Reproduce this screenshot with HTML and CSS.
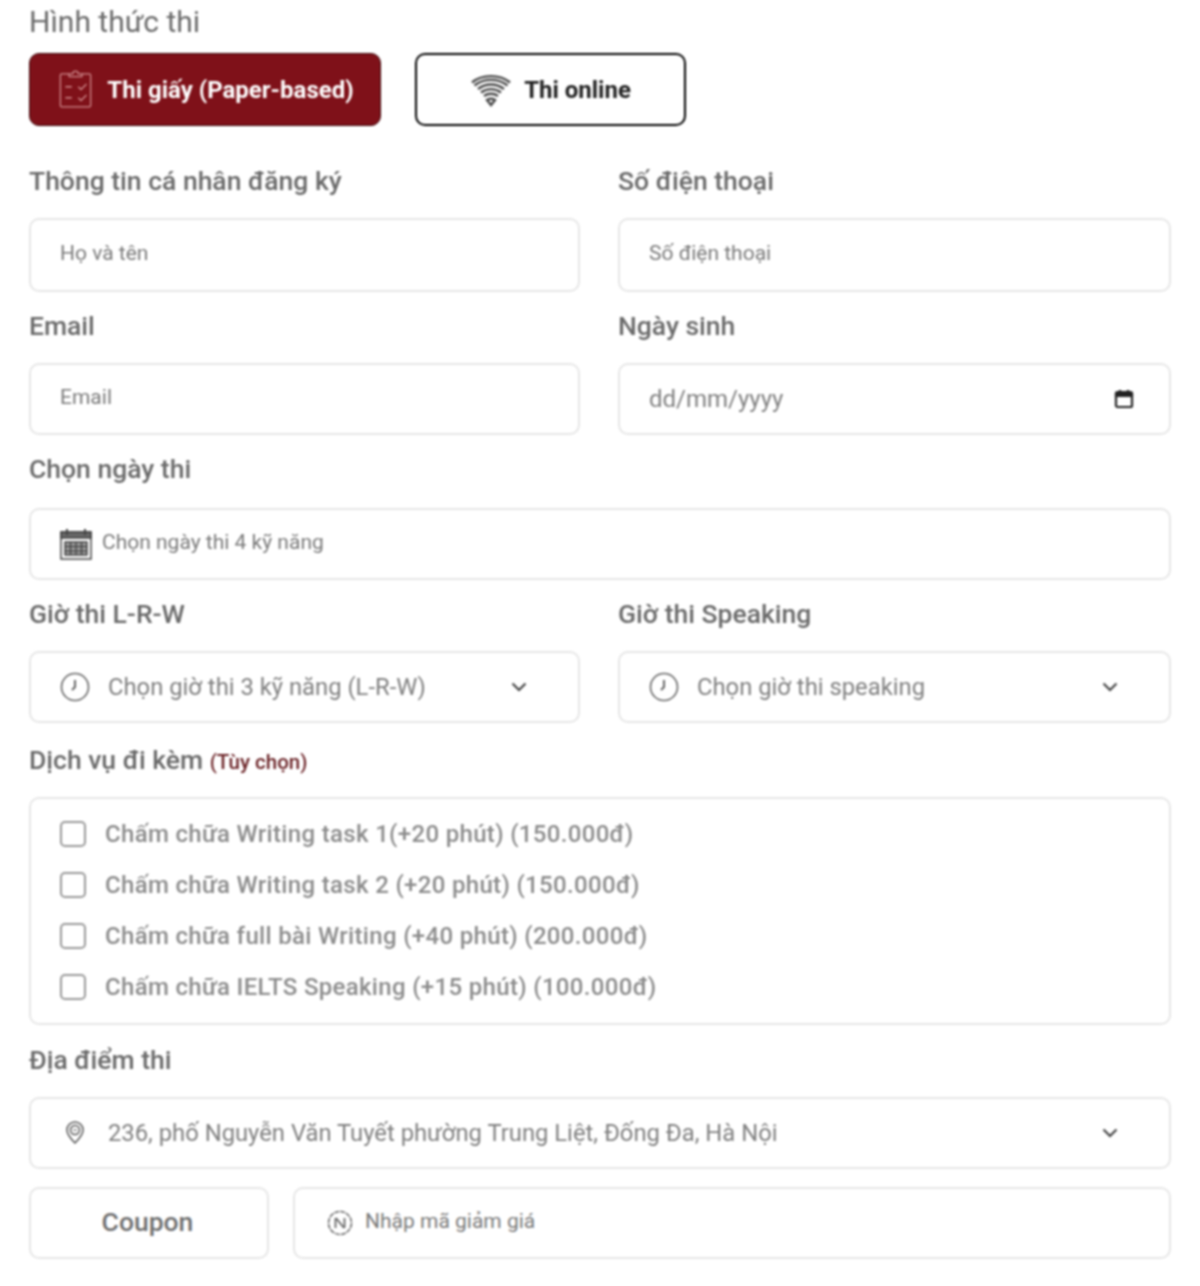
FILE: index.html
```html
<html>
 <head>
  <meta charset="utf-8">
  <link rel="stylesheet" href="styles.css">
 </head>
 <body>
  <form id="examForm">
    <!-- Exam type -->
    <div class="label label-first">Hình thức thi</div>
    <div class="types">
      <button type="button" class="type-btn active">
        <svg class="type-icon" viewBox="0 0 36 44" width="33" height="41" fill="none" stroke="#cf8c8e" stroke-width="1.400">
          <path d="M11 5H3a1.500 1.500 0 0 0-1.500 1.500v33A1.500 1.500 0 0 0 3 41h30a1.500 1.500 0 0 0 1.500-1.500v-33A1.500 1.500 0 0 0 33 5h-8"/>
          <path d="M11 8V5h4a3 3 0 0 1 6 0h4v3z"/>
          <path d="M7 19h7M7 31h7M21 19l3 3 6-6M21 31l3 3 6-6"/>
        </svg>
        <span>Thi giấy (Paper-based)</span>
      </button>
      <button type="button" class="type-btn online">
        <svg class="type-icon" viewBox="0 0 42 34" width="42" height="34" fill="none" stroke="#4a4a4a" stroke-width="2.400">
          <path d="M2 9.500C12 1 30 1 40 9.500"/>
          <path d="M4.500 12.500c9.500-7.500 23.500-7.500 33 0"/>
          <path d="M8 16c7.500-6 18.500-6 26 0"/>
          <path d="M11 19.500c6-4.500 14-4.500 20 0"/>
          <path d="M14 23c4-3 10-3 14 0"/>
          <path d="M17 27l4 5 4-5c-2.500-1.500-5.500-1.500-8 0z"/>
        </svg>
        <span>Thi online</span>
      </button>
    </div>

    <!-- Contact info -->
    <div class="cols cols-first">
      <div>
        <div class="label">Thông tin cá nhân đăng ký</div>
        <div class="field field-tall"><input class="input" placeholder="Họ và tên"></div>
      </div>
      <div>
        <div class="label">Số điện thoại</div>
        <div class="field field-tall"><input class="input" placeholder="Số điện thoại"></div>
      </div>
    </div>
    <div class="cols">
      <div>
        <div class="label">Email</div>
        <div class="field"><input class="input" placeholder="Email"></div>
      </div>
      <div>
        <div class="label">Ngày sinh</div>
        <div class="field">
          <span class="value date-text">dd/mm/yyyy</span>
          <svg class="date-icon" viewBox="0 0 20 20" width="20" height="20" fill="none" stroke="#222" stroke-width="2.200">
            <rect x="2" y="3" width="16" height="15" rx="1.500"/>
            <path d="M2 4.500h16v2.500H2z" fill="#222"/>
            <path d="M6 1v2M14 1v2"/>
          </svg>
        </div>
      </div>
    </div>

    <!-- Exam date -->
    <div class="group">
      <div class="label label-date">Chọn ngày thi</div>
      <div class="field">
        <svg class="cal-icon" viewBox="0 0 32 32" width="32" height="32" fill="none" stroke="#444" stroke-width="1.500">
          <path d="M1 4h30v27H1z"/>
          <path d="M1 4h30v6H1z" fill="#666"/>
          <path d="M7 1v6M25 1v6" stroke-width="2"/>
          <path d="M5 14h22v13H5z" fill="#999"/>
          <path d="M5 18.500h22M5 23h22M10.500 14v13M16 14v13M21.500 14v13" stroke="#333" stroke-width="1"/>
        </svg>
        <input class="input" placeholder="Chọn ngày thi 4 kỹ năng">
      </div>
    </div>

    <!-- Exam time -->
    <div class="cols">
      <div>
        <div class="label">Giờ thi L-R-W</div>
        <div class="field select">
          <svg class="clock-icon" viewBox="0 0 30 30" width="30" height="30" fill="none" stroke="#666" stroke-width="1.600">
            <circle cx="15" cy="15" r="13.500"/>
            <path d="M15 8v7l-3 3" stroke-width="2"/>
          </svg>
          <span class="value">Chọn giờ thi 3 kỹ năng (L-R-W)</span>
          <svg class="chevron" viewBox="0 0 16 10" width="16" height="10" fill="none" stroke="#444" stroke-width="2.200"><path d="M1.500 1.500 8 8l6.500-6.500"/></svg>
        </div>
      </div>
      <div>
        <div class="label">Giờ thi Speaking</div>
        <div class="field select">
          <svg class="clock-icon" viewBox="0 0 30 30" width="30" height="30" fill="none" stroke="#666" stroke-width="1.600">
            <circle cx="15" cy="15" r="13.500"/>
            <path d="M15 8v7l-3 3" stroke-width="2"/>
          </svg>
          <span class="value">Chọn giờ thi speaking</span>
          <svg class="chevron" viewBox="0 0 16 10" width="16" height="10" fill="none" stroke="#444" stroke-width="2.200"><path d="M1.500 1.500 8 8l6.500-6.500"/></svg>
        </div>
      </div>
    </div>

    <!-- Extra services -->
    <div class="group group-services">
      <div class="label label-services">Dịch vụ đi kèm <span class="optional">(Tùy chọn)</span></div>
      <div class="services">
        <label class="service"><input type="checkbox" class="check"><span>Chấm chữa Writing task 1(+20 phút) (150.000đ)</span></label>
        <label class="service"><input type="checkbox" class="check"><span>Chấm chữa Writing task 2 (+20 phút) (150.000đ)</span></label>
        <label class="service"><input type="checkbox" class="check"><span>Chấm chữa full bài Writing (+40 phút) (200.000đ)</span></label>
        <label class="service"><input type="checkbox" class="check"><span>Chấm chữa IELTS Speaking (+15 phút) (100.000đ)</span></label>
      </div>
    </div>

    <!-- Place -->
    <div class="group group-place">
      <div class="label">Địa điểm thi</div>
      <div class="field select">
        <svg class="pin-icon" viewBox="0 0 20 24" width="20" height="24" fill="none" stroke="#555" stroke-width="1.500">
          <path d="M10 22C5 17 2 13 2 9a8 8 0 0 1 16 0c0 4-3 8-8 13z"/>
          <circle cx="10" cy="9" r="4.500"/>
          <path d="M8 9h4" stroke-width="1"/>
        </svg>
        <span class="value">236, phố Nguyễn Văn Tuyết phường Trung Liệt, Đống Đa, Hà Nội</span>
        <svg class="chevron" viewBox="0 0 16 10" width="16" height="10" fill="none" stroke="#444" stroke-width="2.200"><path d="M1.500 1.500 8 8l6.500-6.500"/></svg>
      </div>
    </div>

    <!-- Coupon -->
    <div class="coupon">
      <div class="field coupon-label">Coupon</div>
      <div class="field coupon-field">
        <svg class="badge-icon" viewBox="0 0 28 28" width="28" height="28" fill="none" stroke="#666" stroke-width="1.500">
          <circle cx="14" cy="14" r="11.500" stroke-dasharray="5 1"/>
          <path d="M10 9l8 10M9.500 19V9M18.500 19V9" stroke-width="1.800"/>
        </svg>
        <input class="input" placeholder="Nhập mã giảm giá">
      </div>
    </div>
  </form>
</body>
</html>
```

FILE: styles.css
```css
body{
  margin: 0;
  background-color: #fff;
  font-family: Roboto, "Noto Sans", sans-serif;
  color: #666;
}
#examForm{
  padding: 5px 29px 0;
  filter: blur(0.8px);
}
.label{
  font-size: 26.500px;
  font-weight: 500;
  line-height: 34px;
  color: #6a6a6a;
  margin-bottom: 20px;
}
.label-first{
  font-size: 30px;
  font-weight: 400;
  margin-bottom: 14px;
}
.label-date{
  margin-bottom: 22px;
}
.label-services{
  margin-bottom: 18px;
}
.optional{
  font-size: 20.500px;
  font-weight: 500;
  color: #6a2226;
}
.types{
  display: flex;
  gap: 34px;
}
.type-btn{
  display: flex;
  align-items: center;
  justify-content: center;
  height: 73px;
  border-radius: 10px;
  font-family: Roboto, sans-serif;
  font-size: 24px;
  font-weight: 700;
  padding: 0;
}
.type-btn.active{
  width: 352px;
  gap: 15px;
  padding-left: 3px;
  background-color: #7f1119;
  border: 1px solid #3b0a0d;
  color: #fff;
}
.type-btn.online{
  width: 271px;
  gap: 12px;
  background-color: #fff;
  border: 2px solid #000;
  color: #222;
}
.cols{
  display: grid;
  grid-template-columns: 551px 1fr;
  gap: 38px;
  margin-top: 17px;
}
.cols-first{
  margin-top: 38px;
}
.group{
  margin-top: 17px;
}
.group-services{
  margin-top: 20px;
}
.group-place{
  margin-top: 18px;
}
.field{
  display: flex;
  align-items: center;
  box-sizing: border-box;
  height: 72px;
  padding: 0 29px;
  border: 2px solid #e6e6e6;
  border-radius: 10px;
  background-color: #fff;
}
.field-tall{
  height: 74px;
}
.input{
  flex: 1;
  min-width: 0;
  border: none;
  outline: none;
  padding: 0 0 4px;
  background: none;
  font-family: Roboto, sans-serif;
  font-size: 21px;
  color: #777;
}
.input::placeholder{
  color: #7a7a7a;
}
.value{
  flex: 1;
  font-size: 23.800px;
  color: #808080;
  white-space: nowrap;
}
.date-text{
  font-size: 24px;
}
.date-icon{
  margin-right: 6px;
}
.cal-icon{
  margin-right: 10px;
}
.clock-icon{
  margin-right: 18px;
}
.pin-icon{
  margin: 0 23px 0 5px;
}
.badge-icon{
  margin: 0 11px 0 2px;
}
.chevron{
  margin-right: 22px;
}
.services{
  box-sizing: border-box;
  height: 228px;
  padding: 10px 29px;
  border: 2px solid #e6e6e6;
  border-radius: 10px;
  display: flex;
  flex-direction: column;
  gap: 1px;
}
.service{
  display: flex;
  align-items: center;
  gap: 19px;
  height: 50px;
  font-size: 24px;
  font-weight: 500;
  letter-spacing: 0.330px;
  color: #8c8c8c;
}
.check{
  appearance: none;
  box-sizing: border-box;
  width: 26px;
  height: 26px;
  margin: 0;
  border: 2px solid #999;
  border-radius: 5px;
  background-color: #fff;
}
.coupon{
  display: flex;
  gap: 24px;
  margin-top: 18px;
}
.coupon-label{
  width: 240px;
  justify-content: center;
  flex-shrink: 0;
  font-size: 26.500px;
  font-weight: 500;
  color: #707070;
  padding: 0 32px 3px 29px;
}
.coupon-field{
  flex: 1;
}
```
